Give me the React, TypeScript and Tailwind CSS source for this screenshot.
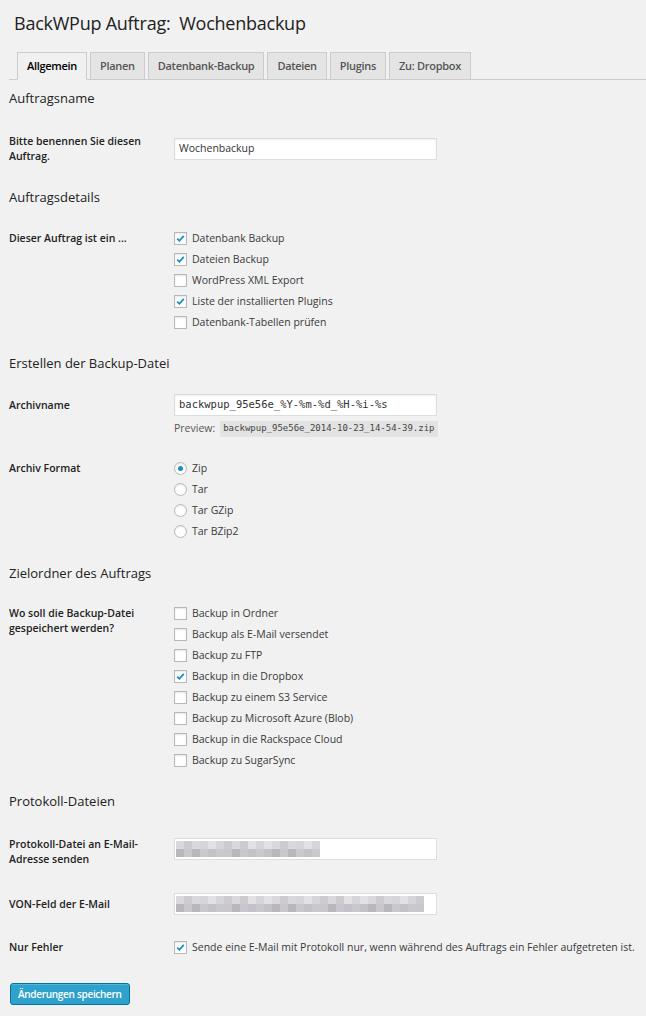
import React from "react";

const FONT = "font-['Open_Sans',_'Noto_Sans',_sans-serif]";

const TABS = ["Allgemein", "Planen", "Datenbank-Backup", "Dateien", "Plugins", "Zu: Dropbox"];

const JOB_TYPES = [
  { label: "Datenbank Backup", on: true },
  { label: "Dateien Backup", on: true },
  { label: "WordPress XML Export", on: false },
  { label: "Liste der installierten Plugins", on: true },
  { label: "Datenbank-Tabellen prüfen", on: false },
];

const FORMATS = ["Zip", "Tar", "Tar GZip", "Tar BZip2"];

const DESTS = [
  { label: "Backup in Ordner", on: false },
  { label: "Backup als E-Mail versendet", on: false },
  { label: "Backup zu FTP", on: false },
  { label: "Backup in die Dropbox", on: true },
  { label: "Backup zu einem S3 Service", on: false },
  { label: "Backup zu Microsoft Azure (Blob)", on: false },
  { label: "Backup in die Rackspace Cloud", on: false },
  { label: "Backup zu SugarSync", on: false },
];

// pixelated (blurred) e-mail addresses
const SHADES = [
  "bg-[#d9d8dc]", "bg-[#c9c7cd]", "bg-[#cfcdd2]", "bg-[#d6d5d9]", "bg-[#c4c2c8]",
  "bg-[#dddce0]", "bg-[#cdcbd0]", "bg-[#b9b7bd]", "bg-[#d2d1d5]", "bg-[#e2e1e4]",
  "bg-[#c7c9cc]", "bg-[#d8d6dc]",
];

function Pixels({ cols }: { cols: number }) {
  return (
    <div className="flex flex-col">
      {[0, 1].map((r) => (
        <div key={r} className="flex">
          {Array.from({ length: cols }).map((_, c) => (
            <div key={c} className={`h-[8px] w-[8px] ${SHADES[(c * 5 + r * 7 + (c % 3)) % SHADES.length]}`} />
          ))}
        </div>
      ))}
    </div>
  );
}

function Check({ on }: { on: boolean }) {
  return (
    <span className="flex h-[13px] w-[13px] shrink-0 items-center justify-center border border-[#b4b9be] bg-white shadow-[inset_0_1px_2px_rgba(0,0,0,0.1)]">
      {on && (
        <svg width="11" height="11" viewBox="0 0 11 11">
          <path d="M2.2 5.6 L4.4 7.8 L8.8 2.8" fill="none" stroke="#1e8cbe" strokeWidth="1.8" />
        </svg>
      )}
    </span>
  );
}

function Radio({ on }: { on: boolean }) {
  return (
    <span className="flex h-[13px] w-[13px] shrink-0 items-center justify-center rounded-full border border-[#b4b9be] bg-white shadow-[inset_0_1px_2px_rgba(0,0,0,0.1)]">
      {on && <span className="h-[5px] w-[5px] rounded-full bg-[#1e8cbe]" />}
    </span>
  );
}

function Heading({ children, className = "" }: { children: React.ReactNode; className?: string }) {
  return <h3 className={`h-[20px] text-[13px] leading-[20px] text-[#222] ${className}`}>{children}</h3>;
}

function Label({ children, className = "" }: { children: React.ReactNode; className?: string }) {
  return <div className={`w-[165px] shrink-0 pr-[10px] text-[10.5px] font-semibold leading-[15px] text-[#222] ${className}`}>{children}</div>;
}

function CheckList({ items }: { items: { label: string; on: boolean }[] }) {
  return (
    <div className="flex flex-col">
      {items.map((it) => (
        <div key={it.label} className="flex h-[21px] items-center gap-[5px] text-[10.5px] text-[#3a3a3a]">
          <Check on={it.on} />
          <span>{it.label}</span>
        </div>
      ))}
    </div>
  );
}

export default function App() {
  return (
    <div className={`min-h-screen bg-[#f1f1f1] pl-[9px] pt-[9px] ${FONT}`}>
      <h2 className="ml-[5px] h-[28px] text-[18px] leading-[28px] tracking-[-0.25px] text-[#222]">
        BackWPup Auftrag:&nbsp; Wochenbackup
      </h2>

      <div className="mt-[15px] flex h-[28px] items-end border-b border-[#ccc] pl-[8px]">
        {TABS.map((t, i) => (
          <div
            key={t}
            className={`-mb-px mr-[3px] flex h-[28px] items-center border px-[9px] text-[11px] font-semibold tracking-[-0.3px] ${
              i === 0
                ? "border-[#ccc] border-b-[#f1f1f1] bg-[#f1f1f1] text-black"
                : "border-[#ccc] bg-[#e4e4e4] text-[#555]"
            }`}
          >
            {t}
          </div>
        ))}
      </div>

      <Heading className="mt-[8px]">Auftragsname</Heading>
      <div className="mt-[26px] flex">
        <Label>Bitte benennen Sie diesen Auftrag.</Label>
        <div className="mt-[4px] flex h-[22px] w-[263px] items-center border border-[#ddd] bg-white px-[4px] text-[10.5px] text-[#333] shadow-[inset_0_1px_2px_rgba(0,0,0,0.07)]">
          Wochenbackup
        </div>
      </div>

      <Heading className="mt-[23px]">Auftragsdetails</Heading>
      <div className="mt-[21px] flex">
        <Label className="pt-[3px]">Dieser Auftrag ist ein ...</Label>
        <CheckList items={JOB_TYPES} />
      </div>

      <Heading className="mt-[20px]">Erstellen der Backup-Datei</Heading>
      <div className="mt-[21px] flex">
        <Label className="pt-[4px]">Archivname</Label>
        <div className="flex flex-col">
          <div className="flex h-[22px] w-[263px] items-center border border-[#ddd] bg-white px-[4px] font-['DejaVu_Sans_Mono',_monospace] text-[10.5px] text-[#333] shadow-[inset_0_1px_2px_rgba(0,0,0,0.07)]">
            backwpup_95e56e_%Y-%m-%d_%H-%i-%s
          </div>
          <div className="mt-[5px] flex h-[16px] items-center text-[10.5px] text-[#555]">
            <span className="mr-[5px]">Preview:</span>
            <code className="flex h-[16px] items-center bg-[#e3e3e3] px-[3px] font-['DejaVu_Sans_Mono',_monospace] text-[9px] text-[#444]">
              backwpup_95e56e_2014-10-23_14-54-39.zip
            </code>
          </div>
        </div>
      </div>

      <div className="mt-[21px] flex">
        <Label className="pt-[3px]">Archiv Format</Label>
        <div className="flex flex-col">
          {FORMATS.map((f, i) => (
            <div key={f} className="flex h-[21px] items-center gap-[5px] text-[10.5px] text-[#3a3a3a]">
              <Radio on={i === 0} />
              <span>{f}</span>
            </div>
          ))}
        </div>
      </div>

      <Heading className="mt-[21px]">Zielordner des Auftrags</Heading>
      <div className="mt-[20px] flex">
        <Label className="pt-[3px]">Wo soll die Backup-Datei gespeichert werden?</Label>
        <CheckList items={DESTS} />
      </div>

      <Heading className="mt-[20px]">Protokoll-Dateien</Heading>
      <div className="mt-[25px] flex">
        <Label className="pt-[1px]">Protokoll-Datei an E-Mail-Adresse senden</Label>
        <div className="mt-[2px] flex h-[22px] w-[263px] items-center border border-[#ddd] bg-white px-[1px]">
          <Pixels cols={18} />
        </div>
      </div>

      <div className="mt-[26px] flex">
        <Label className="pt-[4px]">VON-Feld der E-Mail</Label>
        <div className="flex h-[22px] w-[263px] items-center border border-[#ddd] bg-white px-[1px]">
          <Pixels cols={31} />
        </div>
      </div>

      <div className="mt-[22px] flex">
        <Label className="pt-[3px]">Nur Fehler</Label>
        <div className="flex h-[21px] items-center gap-[5px] whitespace-nowrap text-[10.5px] text-[#3a3a3a]">
          <Check on />
          <span>Sende eine E-Mail mit Protokoll nur, wenn während des Auftrags ein Fehler aufgetreten ist.</span>
        </div>
      </div>

      <button className="ml-[1px] mt-[25px] h-[22px] rounded-[3px] border border-[#0074a2] bg-[#2ea2cc] px-[7px] text-[10px] font-semibold tracking-[-0.3px] text-white shadow-[inset_0_1px_0_rgba(120,200,230,0.5)]">
        Änderungen speichern
      </button>
    </div>
  );
}
